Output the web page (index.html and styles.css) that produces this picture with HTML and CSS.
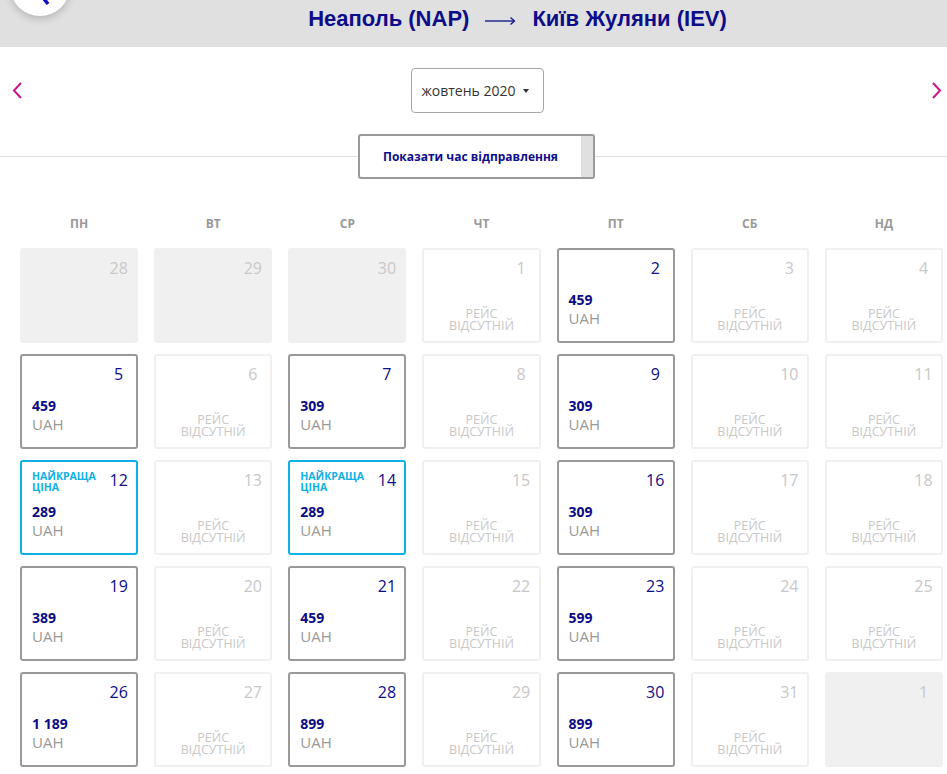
FILE: index.html
```html
<!DOCTYPE html>
<html lang="uk">
<head>
<meta charset="utf-8">
<title>Календар рейсів</title>
<link rel="stylesheet" href="styles.css">
</head>
<body>
<header class="topbar">
  <button class="back" aria-label="Назад">
    <svg width="60" height="60" viewBox="0 0 60 60"><polyline points="38,12 24,30 38,48" fill="none" stroke="#1111c4" stroke-width="3.5"/></svg>
  </button>
  <h1 class="route">
    <span>Неаполь (NAP)</span>
    <svg class="route__arrow" width="31" height="10" viewBox="0 0 31 10"><line x1="0" y1="5" x2="29" y2="5" stroke="#0d0d8a" stroke-width="1.3"/><polyline points="25.5,1.5 29.5,5 25.5,8.5" fill="none" stroke="#0d0d8a" stroke-width="1.2"/></svg>
    <span>Київ Жуляни (IEV)</span>
  </h1>
</header>

<nav class="monthnav">
  <a class="monthnav__arrow monthnav__arrow--prev" aria-label="Попередній">
    <svg width="10" height="17" viewBox="0 0 10 17"><polyline points="9,1 2,8.5 9,16" fill="none" stroke="#c8168c" stroke-width="2"/></svg>
  </a>
  <div class="select">
    <span>жовтень 2020</span>
    <span class="select__caret"></span>
  </div>
  <a class="monthnav__arrow monthnav__arrow--next" aria-label="Наступний">
    <svg width="10" height="17" viewBox="0 0 10 17"><polyline points="1,1 8,8.5 1,16" fill="none" stroke="#c8168c" stroke-width="2"/></svg>
  </a>
</nav>

<div class="divider">
  <button class="toggle"><span class="toggle__label">Показати час відправлення</span><span class="toggle__knob"></span></button>
</div>

<div class="weekdays">
  <div>ПН</div><div>ВТ</div><div>СР</div><div>ЧТ</div><div>ПТ</div><div>СБ</div><div>НД</div>
</div>

<main class="calendar">
  <div class="cell cell--out"><div class="cell__top"><span class="cell__day">28</span></div></div>
  <div class="cell cell--out"><div class="cell__top"><span class="cell__day">29</span></div></div>
  <div class="cell cell--out"><div class="cell__top"><span class="cell__day">30</span></div></div>
  <div class="cell cell--none"><div class="cell__top"><span class="cell__day">1</span></div><div class="cell__note">Рейс<br>відсутній</div></div>
  <div class="cell cell--ok"><div class="cell__top"><span class="cell__day">2</span></div><div class="cell__price">459</div><div class="cell__cur">UAH</div></div>
  <div class="cell cell--none"><div class="cell__top"><span class="cell__day">3</span></div><div class="cell__note">Рейс<br>відсутній</div></div>
  <div class="cell cell--none"><div class="cell__top"><span class="cell__day">4</span></div><div class="cell__note">Рейс<br>відсутній</div></div>

  <div class="cell cell--ok"><div class="cell__top"><span class="cell__day">5</span></div><div class="cell__price">459</div><div class="cell__cur">UAH</div></div>
  <div class="cell cell--none"><div class="cell__top"><span class="cell__day">6</span></div><div class="cell__note">Рейс<br>відсутній</div></div>
  <div class="cell cell--ok"><div class="cell__top"><span class="cell__day">7</span></div><div class="cell__price">309</div><div class="cell__cur">UAH</div></div>
  <div class="cell cell--none"><div class="cell__top"><span class="cell__day">8</span></div><div class="cell__note">Рейс<br>відсутній</div></div>
  <div class="cell cell--ok"><div class="cell__top"><span class="cell__day">9</span></div><div class="cell__price">309</div><div class="cell__cur">UAH</div></div>
  <div class="cell cell--none"><div class="cell__top"><span class="cell__day">10</span></div><div class="cell__note">Рейс<br>відсутній</div></div>
  <div class="cell cell--none"><div class="cell__top"><span class="cell__day">11</span></div><div class="cell__note">Рейс<br>відсутній</div></div>

  <div class="cell cell--best"><div class="cell__top"><span class="cell__badge">Найкраща<br>ціна</span><span class="cell__day">12</span></div><div class="cell__price">289</div><div class="cell__cur">UAH</div></div>
  <div class="cell cell--none"><div class="cell__top"><span class="cell__day">13</span></div><div class="cell__note">Рейс<br>відсутній</div></div>
  <div class="cell cell--best"><div class="cell__top"><span class="cell__badge">Найкраща<br>ціна</span><span class="cell__day">14</span></div><div class="cell__price">289</div><div class="cell__cur">UAH</div></div>
  <div class="cell cell--none"><div class="cell__top"><span class="cell__day">15</span></div><div class="cell__note">Рейс<br>відсутній</div></div>
  <div class="cell cell--ok"><div class="cell__top"><span class="cell__day">16</span></div><div class="cell__price">309</div><div class="cell__cur">UAH</div></div>
  <div class="cell cell--none"><div class="cell__top"><span class="cell__day">17</span></div><div class="cell__note">Рейс<br>відсутній</div></div>
  <div class="cell cell--none"><div class="cell__top"><span class="cell__day">18</span></div><div class="cell__note">Рейс<br>відсутній</div></div>

  <div class="cell cell--ok"><div class="cell__top"><span class="cell__day">19</span></div><div class="cell__price">389</div><div class="cell__cur">UAH</div></div>
  <div class="cell cell--none"><div class="cell__top"><span class="cell__day">20</span></div><div class="cell__note">Рейс<br>відсутній</div></div>
  <div class="cell cell--ok"><div class="cell__top"><span class="cell__day">21</span></div><div class="cell__price">459</div><div class="cell__cur">UAH</div></div>
  <div class="cell cell--none"><div class="cell__top"><span class="cell__day">22</span></div><div class="cell__note">Рейс<br>відсутній</div></div>
  <div class="cell cell--ok"><div class="cell__top"><span class="cell__day">23</span></div><div class="cell__price">599</div><div class="cell__cur">UAH</div></div>
  <div class="cell cell--none"><div class="cell__top"><span class="cell__day">24</span></div><div class="cell__note">Рейс<br>відсутній</div></div>
  <div class="cell cell--none"><div class="cell__top"><span class="cell__day">25</span></div><div class="cell__note">Рейс<br>відсутній</div></div>

  <div class="cell cell--ok"><div class="cell__top"><span class="cell__day">26</span></div><div class="cell__price">1 189</div><div class="cell__cur">UAH</div></div>
  <div class="cell cell--none"><div class="cell__top"><span class="cell__day">27</span></div><div class="cell__note">Рейс<br>відсутній</div></div>
  <div class="cell cell--ok"><div class="cell__top"><span class="cell__day">28</span></div><div class="cell__price">899</div><div class="cell__cur">UAH</div></div>
  <div class="cell cell--none"><div class="cell__top"><span class="cell__day">29</span></div><div class="cell__note">Рейс<br>відсутній</div></div>
  <div class="cell cell--ok"><div class="cell__top"><span class="cell__day">30</span></div><div class="cell__price">899</div><div class="cell__cur">UAH</div></div>
  <div class="cell cell--none"><div class="cell__top"><span class="cell__day">31</span></div><div class="cell__note">Рейс<br>відсутній</div></div>
  <div class="cell cell--out"><div class="cell__top"><span class="cell__day">1</span></div></div>
</main>
</body>
</html>
```
FILE: styles.css
```css
* { box-sizing: border-box; }

html, body {
  margin: 0;
  padding: 0;
  background: #fff;
  overflow: hidden;
}

body {
  font-family: "Open Sans", "Noto Sans", sans-serif;
  color: #333;
  width: 947px;
}

.topbar {
  position: relative;
  height: 47px;
  background: #e0e0e0;
  padding: 6px 0 0 88px;
}

.back {
  position: absolute;
  left: 10px;
  top: -44px;
  width: 60px;
  height: 60px;
  padding: 0;
  border: 0;
  border-radius: 50%;
  background: #fff;
  box-shadow: 0 2px 8px rgba(0, 0, 0, 0.22);
}

.back svg { display: block; }

.route {
  margin: 0;
  display: flex;
  justify-content: center;
  align-items: center;
  font-family: "Liberation Sans", Arial, sans-serif;
  font-weight: bold;
  font-size: 22px;
  line-height: 26px;
  color: #0d0d8a;
}

.route__arrow {
  margin: 3px 16px 0 16px;
  display: block;
}

.monthnav {
  display: grid;
  grid-template-columns: 1fr auto 1fr;
  align-items: center;
  padding: 21px 5px 0 12px;
  height: 87px;
  align-content: start;
}

.monthnav__arrow {
  display: flex;
  align-items: center;
  height: 45px;
}

.monthnav__arrow svg { display: block; }

.monthnav__arrow--next { justify-content: flex-end; }

.select {
  width: 133px;
  height: 45px;
  border: 1px solid #a6a6a6;
  border-radius: 4px;
  display: flex;
  align-items: center;
  justify-content: space-between;
  padding: 0 14px 0 10px;
  font-size: 14px;
  color: #333;
}

.select__caret {
  width: 0;
  height: 0;
  border-left: 3.5px solid transparent;
  border-right: 3.5px solid transparent;
  border-top: 4px solid #333;
}

.divider {
  height: 45px;
  display: flex;
  justify-content: center;
  padding-left: 6px;
  background: linear-gradient(#dddddd, #dddddd) center 22px / 100% 1px no-repeat;
}

.toggle {
  width: 237px;
  height: 45px;
  padding: 0;
  border: 2px solid #9a9a9a;
  border-radius: 3px;
  background: #fff;
  display: flex;
  font-family: "Open Sans", "Noto Sans", sans-serif;
}

.toggle__label {
  flex: 1;
  display: flex;
  align-items: center;
  justify-content: center;
  font-weight: bold;
  font-size: 12px;
  color: #0d0d8a;
}

.toggle__knob {
  width: 12px;
  background: #e0e0e0;
}

.weekdays {
  display: grid;
  grid-template-columns: repeat(7, 1fr);
  column-gap: 16px;
  padding: 37px 4px 16px 20px;
  font-size: 12px;
  line-height: 16px;
  font-weight: bold;
  color: #999;
  text-align: center;
}

.calendar {
  display: grid;
  grid-template-columns: repeat(7, 1fr);
  grid-auto-rows: 95px;
  column-gap: 16px;
  row-gap: 11px;
  padding: 0 4px 0 20px;
}

.cell {
  display: flex;
  flex-direction: column;
  border: 2px solid #f0f0f0;
  border-radius: 3px;
  padding: 8px 2px 9px 10px;
  background: #fff;
}

.cell__top {
  height: 20px;
  display: flex;
  justify-content: flex-end;
  align-items: flex-start;
}

.cell__day {
  min-width: 31px;
  text-align: center;
  font-size: 16px;
  line-height: 20px;
  color: #c8c8c8;
}

.cell--out {
  background: #f0f0f0;
  border-color: #f0f0f0;
}

.cell--ok { border-color: #999; }
.cell--best { border-color: #0db1e6; }

.cell--ok .cell__day,
.cell--best .cell__day { color: #0d0d8a; }

.cell--best .cell__top { justify-content: space-between; }

.cell__badge {
  margin-top: 1px;
  font-size: 10.5px;
  line-height: 11px;
  font-weight: bold;
  text-transform: uppercase;
  color: #0db1e6;
}

.cell__price {
  margin-top: 14px;
  font-size: 14px;
  line-height: 16px;
  font-weight: bold;
  color: #0b0b85;
}

.cell__cur {
  font-size: 15px;
  line-height: 20px;
  color: #999;
}

.cell__note {
  margin-top: auto;
  margin-right: 8px;
  text-align: center;
  font-size: 12.5px;
  line-height: 12px;
  text-transform: uppercase;
  color: #c8c8c8;
}
```
